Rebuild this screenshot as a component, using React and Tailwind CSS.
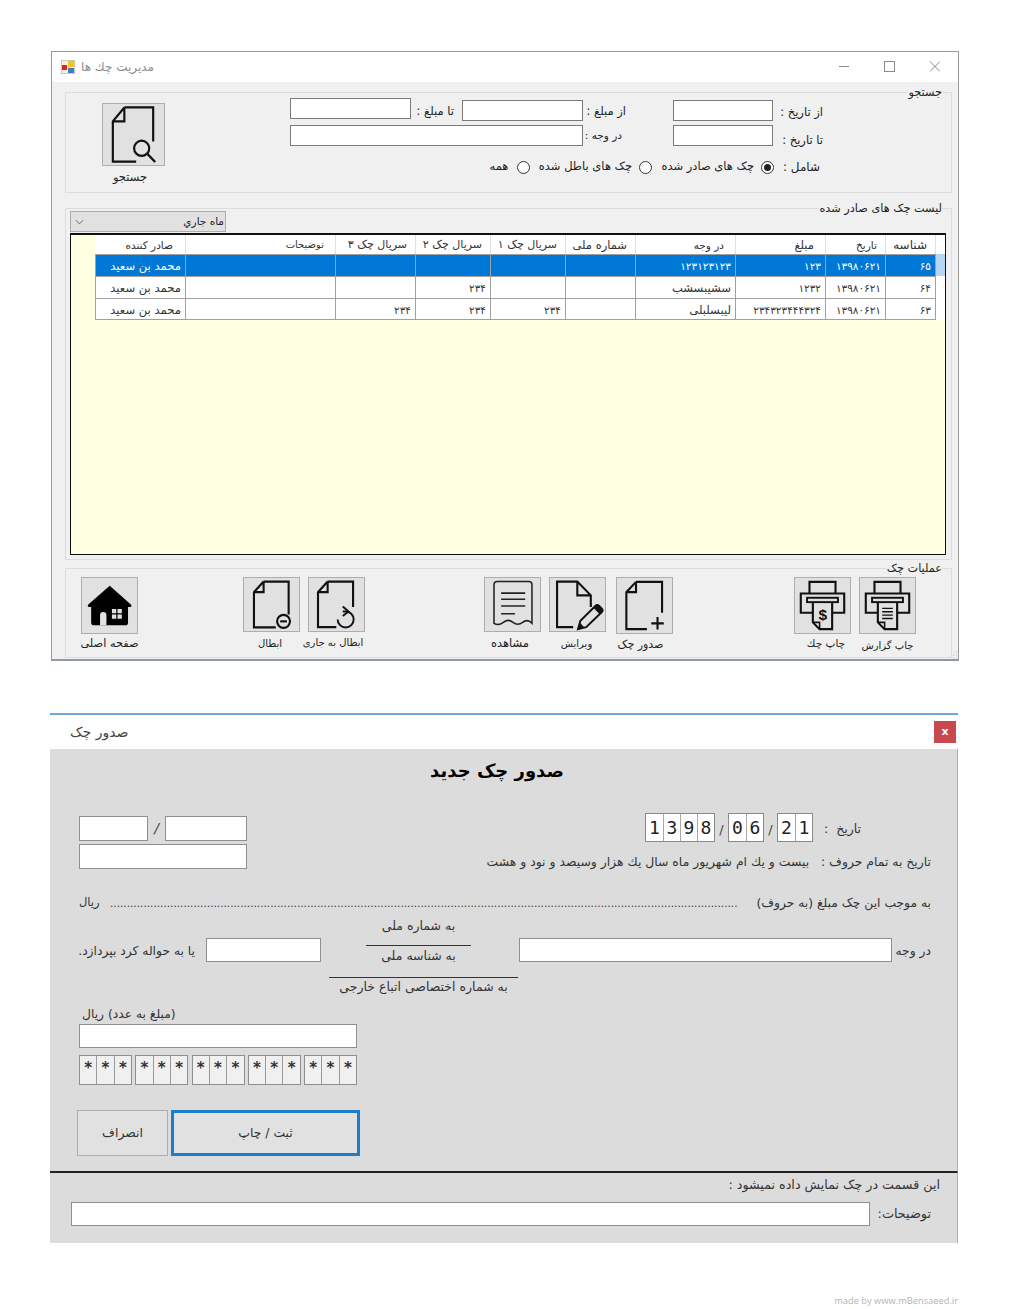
import React from "react";

const rt = "text-right whitespace-nowrap";

function FileBase({ d }) {
  return <path d={d} fill="none" stroke="#111" strokeWidth="2.2" strokeLinejoin="miter" />;
}

const IconSearch = () => (
  <svg viewBox="0 0 62 62" className="w-full h-full">
    <FileBase d="M21.7 3.5H51V38M21.7 3.5L10 17.6V58.5H33.7M21.7 3.5V17.6H10" />
    <circle cx="39.3" cy="45" r="7.7" fill="none" stroke="#111" strokeWidth="2.2" />
    <path d="M45 50.5L53 59" stroke="#111" strokeWidth="2.4" />
  </svg>
);
const IconHome = () => (
  <svg viewBox="0 0 57 57" className="w-full h-full">
    <path d="M28.7 8L6.5 27.5Q5 30 7.5 30H9.5V46Q9.5 49 12.5 49H45Q47.7 49 47.7 46V30H50Q52 30 50.7 27.5Z" fill="#000" />
    <path d="M18.7 49V38.5a3.3 3.3 0 0 1 6.6 0V49Z" fill="#e1e1e1" />
    <path d="M31 32h4.5v4.5H31zM36.8 32h4.5v4.5h-4.5zM31 37.8h4.5v4.5H31zM36.8 37.8h4.5v4.5h-4.5z" fill="#e1e1e1" />
  </svg>
);
const IconCancel = () => (
  <svg viewBox="0 0 57 55" className="w-full h-full">
    <FileBase d="M20.3 3.7H46.3V38M20.3 3.7L10.3 14.7V51.3H33M20.3 3.7V14.7H10.3" />
    <circle cx="41" cy="45" r="6.7" fill="none" stroke="#111" strokeWidth="2.2" />
    <path d="M37.5 45H44.5" stroke="#111" strokeWidth="2.2" />
  </svg>
);
const IconRedo = () => (
  <svg viewBox="0 0 57 55" className="w-full h-full">
    <FileBase d="M19.3 3.7H45.7V30M19.3 3.7L9.3 14.7V51H28.3M19.3 3.7V14.7H9.3" />
    <path d="M35 34.7h3a8.3 8.3 0 1 1-8.3 8.3" fill="none" stroke="#111" strokeWidth="2" />
    <path d="M35 29.5L41 34.7L35 39.5" fill="none" stroke="#111" strokeWidth="2" />
  </svg>
);
const IconReceipt = () => (
  <svg viewBox="0 0 57 55" className="w-full h-full">
    <path d="M9.3 47V7Q9.3 3.7 12.6 3.7H45.4Q48.7 3.7 48.7 7V47Q44 42 39 46Q34 50 29 46Q24 42 19 46Q14 50 9.3 47Z" fill="none" stroke="#222" strokeWidth="1.6" />
    <path d="M16.7 15.7H41.7M16.7 22H41.7M16.7 29H41.7M16.7 37H31" stroke="#222" strokeWidth="1.6" />
  </svg>
);
const IconEdit = () => (
  <svg viewBox="0 0 57 55" className="w-full h-full">
    <FileBase d="M24 51H7.3V3.7H28.3L42.3 18V30M28.3 3.7V18H42.3" />
    <path d="M29 53L31.5 44.5L47 29Q49 27 51 29L53.5 31.5Q55.5 33.5 53.5 35.5L37.5 51Z" fill="none" stroke="#111" strokeWidth="2" />
    <path d="M29 53L31 46.5L35.5 51ZM45 31L51.5 37.5L54 35Q55.5 33.5 54 32L51 29Q49 27.5 47 29Z" fill="#111" />
  </svg>
);
const IconNew = () => (
  <svg viewBox="0 0 57 57" className="w-full h-full">
    <FileBase d="M19.7 4H46.7V36M19.7 4L9.7 14.7V53H31M19.7 4V14.7H9.7" />
    <path d="M42 40.5V53.5M35.5 47H48.5" stroke="#111" strokeWidth="2.2" />
  </svg>
);
const IconPrinter = ({ children }) => (
  <svg viewBox="0 0 57 57" className="w-full h-full">
    <path d="M15 16V4H42V16M18.5 36H6V16H51V36H38.5" fill="none" stroke="#111" strokeWidth="2.2" />
    <rect x="12.5" y="20.5" width="32" height="4.5" fill="none" stroke="#111" strokeWidth="2" />
    <path d="M18.5 25V46L25.5 53H38.5V25" fill="none" stroke="#111" strokeWidth="2.2" />
    <path d="M19 46H25.5V53" fill="none" stroke="#111" strokeWidth="1.6" />
    {children}
  </svg>
);

function ToolBtn({ label, tall = true, wrap, labelCls, children }) {
  return (
    <div className={`flex flex-col items-center w-[57px] ${wrap}`}>
      <button className={`w-[57px] ${tall ? "h-[57px]" : "h-[55px]"} bg-[#e1e1e1] border border-[#adadad] shrink-0`}>{children}</button>
      <span dir="rtl" className={`leading-[13px] text-[#222] whitespace-nowrap ${labelCls}`}>{label}</span>
    </div>
  );
}

function Radio({ on }) {
  return (
    <span className="w-[13px] h-[13px] rounded-full border border-[#333] bg-white flex items-center justify-center shrink-0">
      {on && <span className="w-[7px] h-[7px] rounded-full bg-[#222]" />}
    </span>
  );
}

const WinInput = ({ cls }) => <input className={`h-[21px] bg-white border border-[#7a7a7a] ${cls}`} />;

const Legend = ({ children }) => (
  <span dir="rtl" className="absolute right-[9px] -top-[7px] bg-[#f0f0f0] text-[11.3px] leading-[13px] text-[#222] whitespace-nowrap">{children}</span>
);

const colGrid = "grid grid-cols-[25px_90px_150px_80px_75px_75px_70px_100px_90px_60px_50px_9px]";
const heads = [
  ["صادر کننده", "pr-[12px] text-[10.5px]"], ["توضیحات", "pr-[11px] text-[10px]"], ["سریال چک ۳", "pr-[8px] text-[11px]"], ["سریال چک ۲", "pr-[8px] text-[11px]"],
  ["سریال چک ۱", "pr-[8px] text-[11px]"], ["شماره ملی", "pr-[8px] text-[11.5px]"], ["در وجه", "pr-[11px] text-[10.5px]"], ["مبلغ", "pr-[11px] text-[11.5px]"], ["تاریخ", "pr-[8px] text-[10.5px]"], ["شناسه", "pr-[8px] text-[12px]"],
];
const rows = [
  ["محمد بن سعید", "", "", "", "", "", "۱۲۳۱۲۳۱۲۳", "۱۲۳", "۱۳۹۸۰۶۲۱", "۶۵"],
  ["محمد بن سعید", "", "", "۲۳۴", "", "", "سشیبسشب", "۱۲۳۲", "۱۳۹۸۰۶۲۱", "۶۴"],
  ["محمد بن سعید", "", "۲۳۴", "۲۳۴", "۲۳۴", "", "لیبسلبلی", "۲۳۴۳۲۳۴۴۴۳۲۴", "۱۳۹۸۰۶۲۱", "۶۳"],
];

function DataGrid() {
  return (
    <div className="h-[322px] w-[876px] mt-px bg-[#ffffe1] border border-t-2 border-[#111]">
      <div className={`${colGrid} h-[19px]`}>
        <div />
        {heads.map(([t, p]) => (
          <div key={t} dir="rtl" className={`bg-white border-r border-[#e0e0e0] leading-[20px] text-[#333] text-right whitespace-nowrap ${p}`}>{t}</div>
        ))}
        <div className="bg-white" />
      </div>
      {rows.map((r, i) => (
        <div key={i} className={`${colGrid} h-[22px]`}>
          <div className="border-r border-[#a0a0a0]" />
          {r.map((c, j) => (
            <div key={j} dir="rtl" className={`border-r border-t border-[#a0a0a0] ${/[۰-۹]/.test(c) ? "text-[10.5px]" : "text-[11.6px]"} leading-[22px] pr-[4px] text-right whitespace-nowrap overflow-hidden ${i === 0 ? "bg-[#0078d7] text-white" : "bg-white text-[#333]"} ${i === 2 ? "border-b" : ""}`}>{c}</div>
          ))}
          <div className={i === 0 ? "bg-[#b5d5f0]" : "bg-white"} />
        </div>
      ))}
    </div>
  );
}

function MainWindow() {
  return (
    <div className="ml-px w-[908px] h-[610px] flex flex-col border border-[#9a9a9a] border-b-2 border-b-[#8d99a5] bg-[#f0f0f0]">
      <div className="h-[30px] bg-white flex items-center shrink-0 pl-[9px] pr-[18px]">
        <svg viewBox="0 0 14 14" className="w-[14px] h-[14px]">
          <rect x="0" y="0" width="14" height="14" fill="#f5f0d8" stroke="#777" strokeWidth="0.6" />
          <rect x="7" y="1" width="6" height="6" fill="#f5c518" />
          <rect x="1" y="5" width="5" height="5" fill="#d8262c" />
          <rect x="7" y="8" width="6" height="5" fill="#4a78c8" />
        </svg>
        <span dir="rtl" className="ml-[6px] text-[12px] text-[#8c8c8c]">مدیریت چك ها</span>
        <div className="flex-1" />
        <svg viewBox="0 0 101 12" className="w-[101px] h-[12px]">
          <path d="M0 5.5H10" stroke="#8a8a8a" />
          <rect x="45.5" y="0.5" width="10" height="10" fill="none" stroke="#8a8a8a" />
          <path d="M91 0.5L101 10.5M101 0.5L91 10.5" stroke="#8a8a8a" />
        </svg>
      </div>

      <div className="flex-1 flex flex-col pl-[13px] relative">
        {/* search */}
        <section className="relative mt-[10px] w-[887px] h-[101px] border border-[#dcdcdc] flex shrink-0">
          <Legend>جستجو</Legend>
          <div className="ml-[36px] mt-[10px] w-[63px] flex flex-col items-center">
            <button className="w-[63px] h-[63px] bg-[#e1e1e1] border border-[#adadad] shrink-0"><IconSearch /></button>
            <span className="text-[11.5px] leading-[14px] text-[#222] mt-[4px] mr-[7px]" dir="rtl">جستجو</span>
          </div>
          <div className="ml-[125px] w-[540px] pt-[5px]">
            <div className="grid grid-cols-[121px_51px_121px_90px_100px_57px] grid-rows-[27px_25px]">
              <WinInput cls="w-[121px]" />
              <div dir="rtl" className={`${rt} pr-[8px] text-[11.5px] leading-[26px] text-[#222]`}>تا مبلغ :</div>
              <WinInput cls="w-[121px] mt-[2px]" />
              <div dir="rtl" className={`${rt} pr-[47px] text-[11.5px] leading-[26px] text-[#222]`}>از مبلغ :</div>
              <WinInput cls="w-[100px] mt-[2px]" />
              <div dir="rtl" className={`${rt} pr-[7px] text-[11.5px] leading-[28px] text-[#222]`}>از تاریخ :</div>
              <WinInput cls="col-span-3 w-[293px]" />
              <div dir="rtl" className={`${rt} pr-[51px] text-[10.5px] leading-[20px] text-[#222]`}>در وجه :</div>
              <WinInput cls="w-[100px]" />
              <div dir="rtl" className={`${rt} pr-[7px] text-[11.5px] leading-[30px] text-[#222]`}>تا تاریخ :</div>
            </div>
            <div className="flex items-center mt-[10px] h-[14px] text-[11.5px] text-[#222] pl-[198px] whitespace-nowrap">
              <span dir="rtl" className="w-[22px] text-center">همه</span>
              <span className="ml-[7px]"><Radio /></span>
              <span dir="rtl" className="ml-[11px] w-[91px] text-center">چک های باطل شده</span>
              <span className="ml-[7px]"><Radio /></span>
              <span dir="rtl" className="ml-[10px] w-[92px] text-center">چک های صادر شده</span>
              <span className="ml-[7px]"><Radio on /></span>
              <span dir="rtl" className="ml-[9px] text-[12px]">شامل :</span>
            </div>
          </div>
        </section>

        {/* list */}
        <section className="relative mt-[15px] w-[887px] h-[352px] border border-[#dcdcdc] pl-[4px] pt-[2px] shrink-0">
          <Legend>لیست چک های صادر شده</Legend>
          <div className="w-[156px] h-[21px] bg-[#e1e1e1] border border-[#adadad] flex items-center justify-between pl-[4px] pr-[1px]">
            <svg viewBox="0 0 10 6" className="w-[9px] h-[6px]"><path d="M1 1L5 5L9 1" fill="none" stroke="#555" /></svg>
            <span dir="rtl" className="text-[10.5px] text-[#222]">ماه جاري</span>
          </div>
          <DataGrid />
        </section>

        {/* ops */}
        <section className="relative mt-[8px] w-[887px] h-[90px] border border-[#dcdcdc] flex pt-[8px] pl-[15px] shrink-0">
          <Legend>عملیات چک</Legend>
          <ToolBtn label="صفحه اصلی" labelCls="mt-[3px] text-[11.3px]"><IconHome /></ToolBtn>
          <ToolBtn label="ابطال" tall={false} wrap="ml-[105px]" labelCls="mt-[5px] mr-[3px] text-[10px]"><IconCancel /></ToolBtn>
          <ToolBtn label="ابطال به جاری" tall={false} wrap="ml-[8px]" labelCls="mt-[4px] mr-[7px] text-[10px]"><IconRedo /></ToolBtn>
          <ToolBtn label="مشاهده" tall={false} wrap="ml-[119px]" labelCls="mt-[5px] mr-[5px] text-[11.5px]"><IconReceipt /></ToolBtn>
          <ToolBtn label="ویرایش" tall={false} wrap="ml-[8px]" labelCls="mt-[5px] mr-[2px] text-[10px]"><IconEdit /></ToolBtn>
          <ToolBtn label="صدور چک" wrap="ml-[10px]" labelCls="mt-[4px] mr-[8px] text-[11px]"><IconNew /></ToolBtn>
          <ToolBtn label="چاپ چك" wrap="ml-[121px]" labelCls="mt-[3px] ml-[7px] text-[10.5px]">
            <IconPrinter><text x="28.7" y="44" textAnchor="middle" fontSize="16" fontWeight="700" fill="#111" fontFamily="Liberation Sans">$</text></IconPrinter>
          </ToolBtn>
          <ToolBtn label="چاپ گزارش" wrap="ml-[8px]" labelCls="mt-[5px] text-[10px]">
            <IconPrinter><path d="M23 31.5H34M23 35H34M23 38.5H34M23 42H34" stroke="#111" strokeWidth="1.4" /></IconPrinter>
          </ToolBtn>
        </section>
        <svg viewBox="0 0 6 10" className="absolute right-0 bottom-0 w-[6px] h-[10px]">
          <path d="M1 9h1M4 9h1M4 6h1M4 3h1M1 6h1" stroke="#b5b5b5" />
        </svg>
      </div>
    </div>
  );
}

const DlgInput = ({ cls }) => <input className={`h-[25px] bg-white border border-[#8f8f8f] shrink-0 ${cls}`} />;

function DateCells({ digits }) {
  return (
    <div className="flex h-[29px] border border-[#8a8a8a] bg-white">
      {digits.split("").map((d, i) => (
        <span key={i} className={`w-[17px] text-center text-[18px] leading-[27px] text-[#222] [font-family:'DejaVu_Sans_Mono',monospace] ${i ? "border-l border-[#a8a8a8]" : ""}`}>{d}</span>
      ))}
    </div>
  );
}

function StarCells() {
  return (
    <div className="flex w-[53px] h-[30px] border border-[#8f8f8f] bg-[#f0f0f0]">
      {[0, 1, 2].map((i) => (
        <span key={i} className={`flex-1 text-center text-[15px] font-bold leading-[24px] text-[#333] ${i ? "border-l border-[#9a9a9a]" : ""}`}>*</span>
      ))}
    </div>
  );
}

function Dialog() {
  return (
    <div className="mt-[52px] w-[908px] h-[530px] flex flex-col border-t-2 border-[#6aa9d8]">
      <div className="h-[34px] bg-white flex items-center justify-between pl-[20px] pr-[2px] shrink-0">
        <span dir="rtl" className="text-[14px] text-[#444]">صدور چک</span>
        <button className="w-[22px] h-[22px] bg-[#c9474e] text-white text-[11px] font-bold leading-[18px]">x</button>
      </div>

      <div className="h-[424px] bg-[#dcdcdc] border-b-2 border-b-[#222] border-r border-r-[#a9b0b8] pl-[29px] pr-[26px] shrink-0">
        <h1 dir="rtl" className="h-[64px] pt-[8px] pr-[16px] text-center text-[18px] leading-[28px] font-bold text-[#000]">صدور چک جدید</h1>

        <div className="flex justify-between h-[56px]">
          <div className="w-[168px] pt-[3px]">
            <div className="flex items-center">
              <DlgInput cls="w-[69px]" />
              <span className="w-[17px] text-center text-[14px] italic text-[#444]">/</span>
              <DlgInput cls="w-[82px]" />
            </div>
            <DlgInput cls="w-[168px] mt-[3px] block" />
          </div>
          <div className="w-[447px]">
            <div className="flex items-center pl-[161px]">
              <DateCells digits="1398" />
              <span className="w-[13px] pt-[4px] text-center text-[13px] text-[#444]">/</span>
              <DateCells digits="06" />
              <span className="w-[13px] pt-[4px] text-center text-[13px] text-[#444]">/</span>
              <DateCells digits="21" />
              <span dir="rtl" className="ml-[11px] pt-[3px] text-[12.5px] text-[#333] whitespace-nowrap">تاریخ &nbsp;:</span>
            </div>
            <div dir="rtl" className="mt-[12px] text-[12.4px] leading-[16px] text-[#333] whitespace-nowrap">تاریخ به تمام حروف :&nbsp;&nbsp;&nbsp;بیست و یك ام شهریور ماه سال یك هزار وسیصد و نود و هشت</div>
          </div>
        </div>

        <div className="flex items-center mt-[24px] h-[20px] text-[#333]">
          <span dir="rtl" className="w-[31px] text-[11.5px] text-left">ریال</span>
          <span className="w-[630px] whitespace-nowrap text-[10.5px] leading-[14px]">{".".repeat(188)}</span>
          <span dir="rtl" className="flex-1 text-[12.3px] text-right whitespace-nowrap">به موجب این چک مبلغ (به حروف)</span>
        </div>

        <div className="flex items-start mt-[5px] h-[76px] text-[#333]">
          <span dir="rtl" className="w-[127px] mt-[24px] text-[12.3px] text-right pr-[11px] whitespace-nowrap">یا به حواله کرد بپردازد.</span>
          <input className="w-[115px] h-[24px] mt-[20px] bg-white border border-[#8f8f8f]" />
          <div className="w-[189px] ml-[8px] flex flex-col items-center text-[12.5px]">
            <span dir="rtl" className="h-[16px] leading-[16px] mr-[10px]">به شماره ملی</span>
            <div className="w-[105px] h-[12px] border-b border-[#333] mr-[10px]" />
            <span dir="rtl" className="mt-[2px] h-[18px] leading-[16px] mr-[10px]">به شناسه ملی</span>
            <div dir="rtl" className="w-full h-[12px] border-b border-[#333]" />
            <span dir="rtl" className="h-[17px] leading-[17px] whitespace-nowrap">به شماره اختصاصی اتباع خارجی</span>
          </div>
          <input className="w-[373px] h-[24px] ml-px mt-[20px] bg-white border border-[#8f8f8f]" />
          <span dir="rtl" className="flex-1 mt-[24px] text-[12.3px] text-right whitespace-nowrap">در وجه</span>
        </div>

        <div className="w-[278px] mt-[12px]">
          <div dir="ltr" className="h-[18px] pl-[3px] text-[12.3px] leading-[16px] text-[#333]"><span dir="rtl" className="inline-block">(مبلغ به عدد) ریال</span></div>
          <input className="block w-[278px] h-[24px] bg-white border border-[#8f8f8f]" />
          <div className="flex justify-between mt-[7px]">
            <StarCells /><StarCells /><StarCells /><StarCells /><StarCells />
          </div>
          <div className="flex mt-[25px] -ml-[2px] w-[283px] h-[46px] text-[12.4px] text-[#333]">
            <button dir="rtl" className="w-[91px] bg-[#e1e1e1] border border-[#adadad]">انصراف</button>
            <button dir="rtl" className="ml-[3px] w-[189px] shrink-0 bg-[#e1e1e1] border-[3px] border-[#1c7ecb]">ثبت / چاپ</button>
          </div>
        </div>
      </div>

      <div className="flex-1 bg-[#dcdcdc] border-r border-r-[#a9b0b8] pl-[21px] pr-[17px]">
        <div dir="rtl" className="mt-[3px] h-[18px] text-[12.7px] leading-[18px] text-[#333] whitespace-nowrap">این قسمت در چک نمایش داده نمیشود :</div>
        <div className="flex items-center mt-[8px] pr-[9px]">
          <input className="w-[799px] h-[24px] bg-white border border-[#8f8f8f]" />
          <span dir="rtl" className="flex-1 text-[12.8px] text-right text-[#333] whitespace-nowrap">توضیحات:</span>
        </div>
      </div>
    </div>
  );
}

export default function App() {
  return (
    <div dir="ltr" className="w-[1009px] h-[1309px] bg-white pt-[51px] pl-[50px] [font-family:'DejaVu_Sans',sans-serif] overflow-hidden">
      <MainWindow />
      <Dialog />
      <div className="mt-[52px] w-[908px] text-right text-[9.3px] leading-[12px] text-[#b4b4b4] [font-family:'Open_Sans',sans-serif]">made by www.mBensaeed.ir</div>
    </div>
  );
}
